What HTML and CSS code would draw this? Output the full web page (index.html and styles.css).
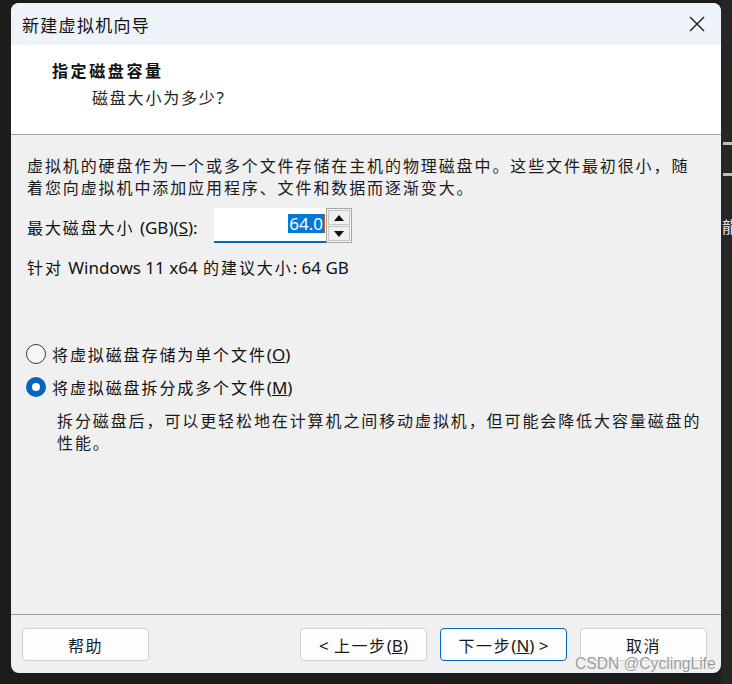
FILE: index.html
```html
<!DOCTYPE html>
<html lang="zh-CN">
<head>
<meta charset="utf-8">
<title>新建虚拟机向导</title>
<link rel="stylesheet" href="styles.css">
</head>
<body>
<div class="desk">
  <div class="side-strip">
    <div class="side-bar"></div>
    <div class="side-bar second"></div>
    <div class="side-char">龍</div>
  </div>
  <div class="window">
    <div class="titlebar">
      <span class="title">新建虚拟机向导</span>
      <svg class="close" width="16" height="16" viewBox="0 0 16 16"><path d="M1 1 L15 15 M15 1 L1 15" stroke="#1a1a1a" stroke-width="1.4" fill="none"/></svg>
    </div>
    <div class="header">
      <div class="h1">指定磁盘容量</div>
      <div class="h2">磁盘大小为多少<span class="lat">?</span></div>
    </div>
    <div class="content">
      <p class="intro">虚拟机的硬盘作为一个或多个文件存储在主机的物理磁盘中。这些文件最初很小，随<br>着您向虚拟机中添加应用程序、文件和数据而逐渐变大。</p>
      <div class="size-row">
        <span class="label">最大磁盘大小 <span class="lat">(GB)(<u>S</u>):</span></span>
        <div class="spin">
          <div class="field"><span class="sel">64.0</span><span class="caret"></span></div>
          <div class="arrows">
            <div class="arrow up"><svg width="10" height="6" viewBox="0 0 10 6"><path d="M5 0 L10 6 L0 6 Z" fill="#111"/></svg></div>
            <div class="arrow down"><svg width="10" height="6" viewBox="0 0 10 6"><path d="M0 0 L10 0 L5 6 Z" fill="#111"/></svg></div>
          </div>
        </div>
      </div>
      <div class="recommend">针对 <span class="lat">Windows 11 x64</span> 的建议大小<span class="lat">: 64 GB</span></div>
      <div class="radio first"><span class="dot"></span><span>将虚拟磁盘存储为单个文件<span class="lat">(<u>O</u>)</span></span></div>
      <div class="radio checked"><span class="dot"></span><span>将虚拟磁盘拆分成多个文件<span class="lat">(<u>M</u>)</span></span></div>
      <p class="desc">拆分磁盘后，可以更轻松地在计算机之间移动虚拟机，但可能会降低大容量磁盘的<br>性能。</p>
    </div>
    <div class="footer">
      <button class="btn">帮助</button>
      <button class="btn push"><span class="lat">&lt;</span> 上一步<span class="lat">(<u>B</u>)</span></button>
      <button class="btn primary">下一步<span class="lat">(<u>N</u>) &gt;</span></button>
      <button class="btn">取消</button>
    </div>
  </div>
  <div class="watermark">CSDN @CyclingLife</div>
</div>
</body>
</html>
```
FILE: styles.css
```css
* { box-sizing: border-box; }
html, body { margin: 0; padding: 0; }
body {
  background: #1c1c1c;
  width: 732px;
  height: 684px;
  overflow: hidden;
  font-family: "Noto Sans", "Noto Sans CJK SC", sans-serif;
  color: #111;
}
.desk {
  position: relative;
  width: 732px;
  height: 684px;
  padding: 3px 0 0 11px;
}
.side-strip {
  position: absolute;
  right: 0;
  top: 0;
  width: 11px;
  height: 684px;
  background: #262626;
}
.side-bar {
  position: absolute;
  left: 2px;
  top: 142px;
  width: 9px;
  height: 3px;
  background: #bdbdbd;
}
.side-bar.second { top: 173px; }
.side-char {
  position: absolute;
  left: 1px;
  top: 214px;
  font-family: "Noto Sans CJK SC", sans-serif;
  font-size: 16px;
  color: #e0e0e0;
}
.window {
  position: relative;
  width: 710px;
  height: 670px;
  border-radius: 8px;
  overflow: hidden;
  background: #f0f0f0;
  display: flex;
  flex-direction: column;
}
.lat {
  font-family: "Noto Sans", sans-serif;
  font-size: 17px;
  letter-spacing: 0;
}
.titlebar {
  height: 42px;
  flex: none;
  background: #eef2f9;
  display: flex;
  align-items: center;
  padding: 0 16px 0 11px;
}
.title {
  font-family: "Noto Sans CJK SC", sans-serif;
  font-size: 17px;
  letter-spacing: 1.3px;
  color: #111;
}
.close { margin-left: auto; }
.header {
  height: 90px;
  flex: none;
  background: #fff;
  border-bottom: 1px solid #a0a0a0;
  padding: 14px 0 0 41px;
  font-family: "Noto Sans CJK SC", sans-serif;
}
.h1 {
  font-size: 16px;
  font-weight: 700;
  line-height: 22px;
  letter-spacing: 2.6px;
}
.h2 {
  margin: 5px 0 0 40px;
  font-size: 16px;
  line-height: 22px;
  letter-spacing: 1.8px;
  color: #222;
}
.content {
  flex: 1;
  padding: 0 0 0 16px;
  font-family: "Noto Sans CJK SC", sans-serif;
  font-size: 16px;
  letter-spacing: 1.9px;
}
.intro {
  margin: 19px 0 0;
  line-height: 22px;
  white-space: nowrap;
  color: #1a1a1a;
}
.size-row {
  margin-top: 10px;
  height: 35px;
  display: flex;
  align-items: center;
  gap: 8px;
}
.label { width: 179px; white-space: nowrap; line-height: 22px; padding-top: 3px; }
.spin {
  display: flex;
  height: 35px;
}
.field {
  width: 112px;
  height: 35px;
  background: #fff;
  border-bottom: 2px solid #0067c0;
  display: flex;
  align-items: center;
  justify-content: flex-end;
  padding: 0 1px 3px 0;
}
.sel {
  font-family: "Noto Sans", sans-serif;
  letter-spacing: 0;
  font-size: 17px;
  line-height: 19px;
  background: #0078d7;
  color: #fff;
  padding: 0 1px;
}
.caret {
  width: 1px;
  height: 19px;
  background: #c06020;
}
.arrows {
  width: 26px;
  height: 35px;
  border: 1px solid #a8a8a8;
  background: #f0f0f0;
  display: flex;
  flex-direction: column;
  padding: 1px;
  gap: 1px;
}
.arrow {
  flex: 1;
  border: 1px solid #c4c4c4;
  background: #f0f0f0;
  display: flex;
  align-items: center;
  justify-content: center;
}
.recommend {
  margin-top: 13px;
  line-height: 22px;
}
.radio {
  display: flex;
  align-items: center;
  gap: 6px;
  line-height: 22px;
  height: 22px;
}
.radio.first { margin-top: 64px; margin-left: -1px; }
.radio.checked { margin-top: 11px; margin-left: -1px; }
.dot {
  width: 20px;
  height: 20px;
  border-radius: 50%;
  border: 1px solid #3a3a3a;
  background: #f6f6f6;
  flex: none;
}
.checked .dot {
  border: 6px solid #0067c0;
  background: #fff;
}
.desc {
  margin: 11px 0 0 30px;
  line-height: 22px;
  white-space: nowrap;
  color: #1a1a1a;
}
.footer {
  flex: none;
  height: 59px;
  border-top: 1px solid #a0a0a0;
  padding: 13px 14px 12px 11px;
  display: flex;
  gap: 13px;
}
.btn {
  width: 127px;
  height: 33px;
  border: 1px solid #d0d0d0;
  border-radius: 4px;
  background: #fdfdfd;
  font-family: "Noto Sans CJK SC", sans-serif;
  font-size: 16px;
  letter-spacing: 1.6px;
  color: #1a1a1a;
  padding: 0;
}
.btn.push { margin-left: auto; }
.btn.primary { border-color: #0067c0; }
.watermark {
  position: absolute;
  left: 575px;
  top: 655px;
  font-family: "Liberation Sans", sans-serif;
  font-size: 15.6px;
  color: #9a9a9a;
  text-shadow: 0 0 1px #fff, 0 0 1px #fff;
}
```
